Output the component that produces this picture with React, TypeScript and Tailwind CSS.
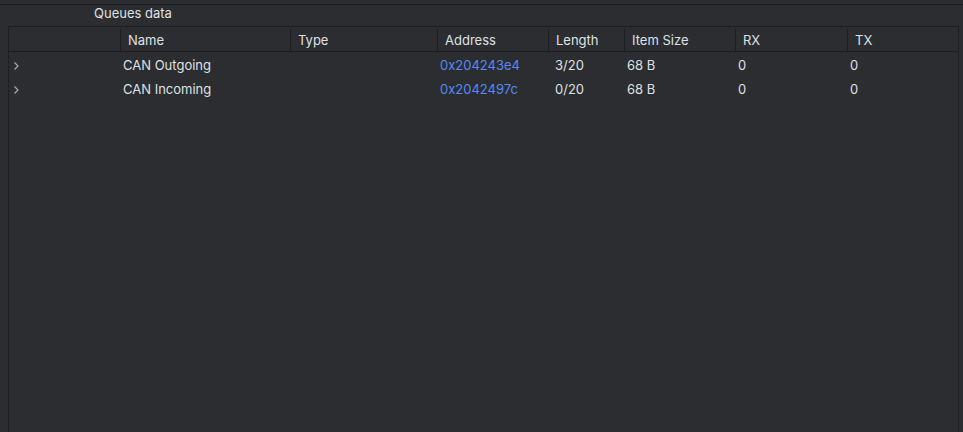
import React from 'react';

type Queue = {
  name: string;
  type: string;
  address: string;
  length: string;
  itemSize: string;
  rx: string;
  tx: string;
};

const queues: Queue[] = [
  { name: 'CAN Outgoing', type: '', address: '0x204243e4', length: '3/20', itemSize: '68 B', rx: '0', tx: '0' },
  { name: 'CAN Incoming', type: '', address: '0x2042497c', length: '0/20', itemSize: '68 B', rx: '0', tx: '0' },
];

const gridCols = 'grid grid-cols-[111px_170px_147px_111px_76px_111px_112px_1fr]';

const Chevron: React.FC = () => (
  <svg width="12" height="12" viewBox="0 0 12 12" className="text-[#a8abb2]">
    <path d="M4.5 2.5 L8 6 L4.5 9.5" fill="none" stroke="currentColor" strokeWidth="1.2" />
  </svg>
);

const HeaderCell: React.FC<{ label?: string; first?: boolean }> = ({ label, first }) => (
  <div className={`h-full flex items-center pt-[2px] ${first ? '' : 'border-l border-[#1e1f22] pl-[7px]'}`}>
    {label}
  </div>
);

const App: React.FC = () => {
  return (
    <div
      className="w-[963px] h-[432px] bg-[#2b2d30] text-[#dfe1e5] text-[13px] overflow-hidden flex flex-col"
      style={{ fontFamily: 'Inter, "Noto Sans", sans-serif' }}
    >
      <div className="h-[4px]" />
      <div className="border-t border-[#1e1f22] h-[22px] leading-[16px] pl-[94px]">Queues data</div>

      <div className="flex-1 ml-[8px] mr-[4px] border-l border-t border-r border-[#1e1f22] flex flex-col">
        {/* header */}
        <div className={`${gridCols} h-[25px] border-b border-[#1e1f22] py-[2px]`}>
          <HeaderCell first />
          <HeaderCell label="Name" />
          <HeaderCell label="Type" />
          <HeaderCell label="Address" />
          <HeaderCell label="Length" />
          <HeaderCell label="Item Size" />
          <HeaderCell label="RX" />
          <HeaderCell label="TX" />
        </div>

        {/* rows */}
        {queues.map((q) => (
          <div key={q.address} className={`${gridCols} h-[24px] pt-[4px] items-center`}>
            <div className="pl-[1px] flex items-center">
              <Chevron />
            </div>
            <div className="pl-[3px]">{q.name}</div>
            <div className="pl-[3px]">{q.type}</div>
            <div className="pl-[3px] text-[#548af7]">{q.address}</div>
            <div className="pl-[7px]">{q.length}</div>
            <div className="pl-[3px]">{q.itemSize}</div>
            <div className="pl-[3px]">{q.rx}</div>
            <div className="pl-[3px]">{q.tx}</div>
          </div>
        ))}
      </div>
    </div>
  );
};

export default App;
